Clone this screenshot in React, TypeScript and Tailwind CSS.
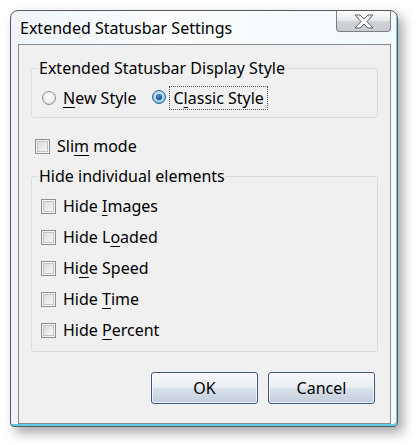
import React from "react";

const font = { fontFamily: '"Noto Sans", "Open Sans", sans-serif' };

function Radio({ checked }: { checked?: boolean }) {
  return (
    <span
      className={
        "relative inline-block w-[14px] h-[14px] rounded-full border shrink-0 " +
        (checked
          ? "border-[#2c628b] bg-[radial-gradient(circle_at_50%_40%,#e6f5ff_0%,#9fd3f7_55%,#5a9fd0_100%)]"
          : "border-[#8e8f8f] bg-[radial-gradient(circle_at_50%_35%,#ffffff_0%,#f0f0f0_50%,#c9c9c9_100%)]")
      }
    >
      {checked && (
        <span className="absolute left-[3px] top-[3px] w-[6px] h-[6px] rounded-full bg-[radial-gradient(circle_at_40%_35%,#4b88c8_0%,#0d2f5f_100%)]" />
      )}
    </span>
  );
}

function Check() {
  return (
    <span className="inline-flex w-[15px] h-[15px] border border-[#8f8f8f] bg-[#f4f4f4] p-[1px] shrink-0">
      <span className="flex-1 border border-[#c5c5c5] bg-[linear-gradient(135deg,#dcdcdc,#f7f7f7)]" />
    </span>
  );
}

function Key({ children }: { children: React.ReactNode }) {
  return <span className="underline underline-offset-[3px]">{children}</span>;
}

function CheckRow({ children }: { children: React.ReactNode }) {
  return (
    <div className="flex items-center h-[22px] gap-[7px]">
      <Check />
      <span>{children}</span>
    </div>
  );
}

function WinButton({ children }: { children: React.ReactNode }) {
  return (
    <button className="w-[107px] h-[32px] rounded-[3px] border border-[#3c5a85] bg-[linear-gradient(#f6f8fb_0%,#eaeef4_48%,#d8e0ea_52%,#c3cedd_100%)] shadow-[inset_0_0_0_1px_rgba(255,255,255,0.7)] text-[16px] text-black">
      {children}
    </button>
  );
}

export default function App() {
  return (
    <div className="w-[417px] h-[445px] bg-white pl-[10px] pt-[10px] text-[16px] text-black" style={font}>
      <div className="w-[388px] h-[417px] flex flex-col rounded-t-[8px] rounded-b-[4px] border border-[#5a5a5a] bg-[linear-gradient(90deg,#eef4f9,#fbfdfe_40%,#f3f8fb)] shadow-[inset_-1px_-2px_0_#5fcde8,5px_6px_12px_rgba(0,0,0,0.35)]">
        <div className="h-[33px] flex items-start">
          <div className="pl-[9px] pt-[7px] text-[16px] leading-[20px]">Extended Statusbar Settings</div>
          <div className="ml-auto mr-[6px] w-[55px] h-[21px] rounded-b-[4px] border border-t-0 border-[#7b7f85] bg-[linear-gradient(#fbfbfb_0%,#e8eaec_45%,#cfd3d8_55%,#c8ccd1_100%)] flex items-center justify-center">
            <svg width="20" height="15" viewBox="0 0 20 15">
              <polygon
                points="1,1 6,1 10,5 14,1 19,1 13,7.5 19,14 14,14 10,10 6,14 1,14 7,7.5"
                fill="#fafafa"
                stroke="#5b5f66"
                strokeWidth="1"
                strokeLinejoin="round"
              />
            </svg>
          </div>
        </div>
        <div className="mx-[6px] ml-[7px] mb-[2px] flex-1 border border-[#8a8a8a] bg-[#f0f0f0] flex flex-col px-[12px] pt-[13px]">
          <fieldset className="border border-[#d5dfe5] rounded-[3px] px-[6px] pb-[8px]">
            <legend className="px-[1px] leading-[20px]">Extended Statusbar Display Style</legend>
            <div className="flex items-center h-[22px] pl-[4px] mt-[9px]">
              <Radio />
              <span className="ml-[7px]">
                <Key>N</Key>ew Style
              </span>
              <span className="ml-[16px]">
                <Radio checked />
              </span>
              <span className="ml-[3px] px-[3px] h-[24px] flex items-center border border-dotted border-[#555]">
                C<Key>l</Key>assic Style
              </span>
            </div>
          </fieldset>
          <div className="mt-[17px] pl-[4px]">
            <CheckRow>
              Sli<Key>m</Key> mode
            </CheckRow>
          </div>
          <fieldset className="mt-[9px] border border-[#d5dfe5] rounded-[3px] px-[6px] pb-[10px]">
            <legend className="px-[1px] leading-[20px]">Hide individual elements</legend>
            <div className="flex flex-col gap-[9px] pl-[3px] mt-[9px]">
              <CheckRow>
                Hide <Key>I</Key>mages
              </CheckRow>
              <CheckRow>
                Hide L<Key>o</Key>aded
              </CheckRow>
              <CheckRow>
                Hi<Key>d</Key>e Speed
              </CheckRow>
              <CheckRow>
                Hide <Key>T</Key>ime
              </CheckRow>
              <CheckRow>
                Hide <Key>P</Key>ercent
              </CheckRow>
            </div>
          </fieldset>
          <div className="mt-[20px] flex justify-end gap-[10px] pr-[3px]">
            <WinButton>OK</WinButton>
            <WinButton>Cancel</WinButton>
          </div>
        </div>
      </div>
    </div>
  );
}
